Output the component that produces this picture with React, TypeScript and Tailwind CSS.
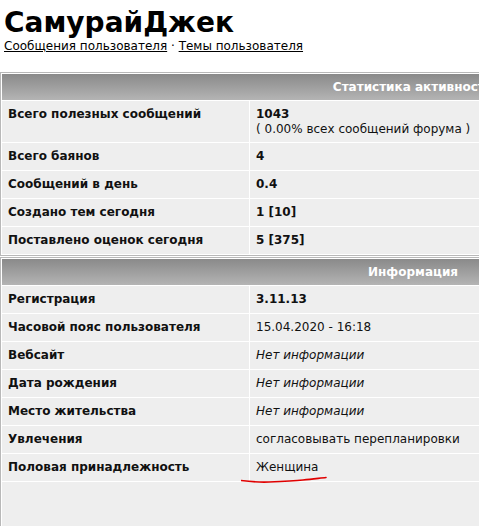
import React from "react";

type Row = { label: string; value: React.ReactNode; tall?: boolean; italic?: boolean; bold?: boolean; mark?: boolean };

const stats: Row[] = [
  {
    label: "Всего полезных сообщений",
    value: (
      <>
        <span className="font-bold">1043</span>
        <br />( 0.00% всех сообщений форума )
      </>
    ),
    tall: true,
  },
  { label: "Всего баянов", value: "4", bold: true },
  { label: "Сообщений в день", value: "0.4", bold: true },
  { label: "Создано тем сегодня", value: "1 [10]", bold: true },
  { label: "Поставлено оценок сегодня", value: "5 [375]", bold: true },
];

const info: Row[] = [
  { label: "Регистрация", value: "3.11.13", bold: true },
  { label: "Часовой пояс пользователя", value: "15.04.2020 - 16:18" },
  { label: "Вебсайт", value: "Нет информации", italic: true },
  { label: "Дата рождения", value: "Нет информации", italic: true },
  { label: "Место жительства", value: "Нет информации", italic: true },
  { label: "Увлечения", value: "согласовывать перепланировки" },
  { label: "Половая принадлежность", value: "Женщина", mark: true },
];

function Header({ title }: { title: string }) {
  return (
    <div className="h-[26px] bg-gradient-to-b from-[#8a8a8a] to-[#b4b4b4] flex items-center justify-center text-white font-bold">
      {title}
    </div>
  );
}

function StatRow({ row }: { row: Row }) {
  const h = row.tall ? "h-[41px]" : "h-[27px]";
  return (
    <div className="flex gap-px">
      <div className={`${h} w-[247px] shrink-0 bg-[#eeeeee] pl-[6px] pt-[6px] font-bold`}>{row.label}</div>
      <div
        className={`${h} flex-1 bg-[#eeeeee] pl-[6px] pt-[6px] relative ${row.bold ? "font-bold" : ""} ${
          row.italic ? "italic" : ""
        }`}
      >
        {row.value}
        {/* red hand-drawn underline */}
        {row.mark && (
          <svg className="absolute left-[-9px] top-[21px] z-10" width="90" height="10" viewBox="0 0 90 10">
            <path
              d="M0 5.5 C 8 6.5, 16 7.5, 28 7 C 40 6.5, 52 6, 62 5 C 72 4, 80 3, 85 2.5"
              fill="none"
              stroke="#e00000"
              strokeWidth="1.6"
              strokeLinecap="round"
            />
          </svg>
        )}
      </div>
    </div>
  );
}

function Block({ title, rows, tail }: { title: string; rows: Row[]; tail?: boolean }) {
  return (
    <div className="w-[826px] border border-[#b8b8b8] bg-white p-px flex flex-col gap-px">
      <Header title={title} />
      {rows.map((r) => (
        <StatRow key={r.label} row={r} />
      ))}
      {tail && <div className="h-[60px] bg-[#eeeeee]" />}
    </div>
  );
}

export default function App() {
  return (
    <div className="w-[479px] h-[526px] overflow-hidden bg-white text-[#111] text-[12px] leading-[15px] font-['DejaVu_Sans',sans-serif]">
      <h1 className="pl-[4px] pt-[7px] text-[28px] leading-[32px] font-bold text-black">СамурайДжек</h1>
      <div className="pl-[4px] text-black">
        <a href="#" className="underline">Сообщения пользователя</a> · <a href="#" className="underline">Темы пользователя</a>
      </div>
      <div className="mt-[18px] flex flex-col gap-px">
        <Block title="Статистика активности" rows={stats} />
        <Block title="Информация" rows={info} tail />
      </div>
    </div>
  );
}
